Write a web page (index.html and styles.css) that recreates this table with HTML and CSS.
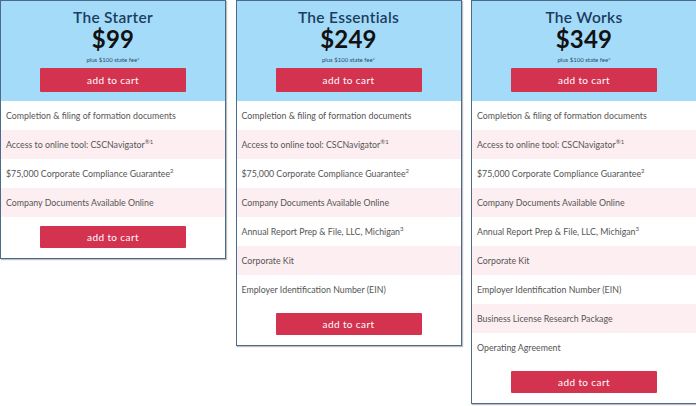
FILE: index.html
```html
<!DOCTYPE html>
<html>
<head>
<meta charset="utf-8">
<link rel="stylesheet" href="styles.css">
</head>
<body>
<div class="plans">
  <div class="card">
    <div class="head">
      <div class="title">The Starter</div>
      <div class="price">$99</div>
      <div class="fee">plus $100 state fee*</div>
      <div class="btn">add to cart</div>
    </div>
    <div class="row">Completion &amp; filing of formation documents</div>
    <div class="row alt">Access to online tool: CSCNavigator<sup>®1</sup></div>
    <div class="row">$75,000 Corporate Compliance Guarantee<sup>2</sup></div>
    <div class="row alt">Company Documents Available Online</div>
    <div class="foot"><div class="btn">add to cart</div></div>
  </div>
  <div class="card">
    <div class="head">
      <div class="title">The Essentials</div>
      <div class="price">$249</div>
      <div class="fee">plus $100 state fee*</div>
      <div class="btn">add to cart</div>
    </div>
    <div class="row">Completion &amp; filing of formation documents</div>
    <div class="row alt">Access to online tool: CSCNavigator<sup>®1</sup></div>
    <div class="row">$75,000 Corporate Compliance Guarantee<sup>2</sup></div>
    <div class="row alt">Company Documents Available Online</div>
    <div class="row">Annual Report Prep &amp; File, LLC, Michigan<sup>3</sup></div>
    <div class="row alt">Corporate Kit</div>
    <div class="row">Employer Identification Number (EIN)</div>
    <div class="foot"><div class="btn">add to cart</div></div>
  </div>
  <div class="card">
    <div class="head">
      <div class="title">The Works</div>
      <div class="price">$349</div>
      <div class="fee">plus $100 state fee*</div>
      <div class="btn">add to cart</div>
    </div>
    <div class="row">Completion &amp; filing of formation documents</div>
    <div class="row alt">Access to online tool: CSCNavigator<sup>®1</sup></div>
    <div class="row">$75,000 Corporate Compliance Guarantee<sup>2</sup></div>
    <div class="row alt">Company Documents Available Online</div>
    <div class="row">Annual Report Prep &amp; File, LLC, Michigan<sup>3</sup></div>
    <div class="row alt">Corporate Kit</div>
    <div class="row">Employer Identification Number (EIN)</div>
    <div class="row alt">Business License Research Package</div>
    <div class="row">Operating Agreement</div>
    <div class="foot"><div class="btn">add to cart</div></div>
  </div>
</div>
</body>
</html>
```
FILE: styles.css
```css
html, body {
  margin: 0;
  padding: 0;
  background: #fff;
}
body {
  font-family: Lato, "Noto Sans", "Liberation Sans", sans-serif;
  width: 696px;
  height: 406px;
  overflow: hidden;
}
.plans {
  display: flex;
  align-items: flex-start;
  gap: 9.5px;
}
.card {
  flex: 0 0 226px;
  box-sizing: border-box;
  border: 1px solid #4a6b89;
  box-shadow: 1px 1px 1px rgba(0, 0, 0, 0.25);
  background: #fff;
}
.head {
  background: #a3dbf9;
  text-align: center;
  padding: 7px 0 9px;
}
.title {
  font-size: 15.5px;
  line-height: 18px;
  font-weight: 600;
  color: #1b3d5e;
  letter-spacing: 0.3px;
}
.price {
  font-size: 24px;
  line-height: 26px;
  font-weight: 700;
  color: #111;
  letter-spacing: 0.2px;
}
.fee {
  font-size: 6px;
  line-height: 10px;
  margin-top: 3px;
  color: #2d4a66;
}
.btn {
  width: 146px;
  height: 24px;
  margin: 3px auto 0;
  background: #d3334f;
  color: #fff;
  font-size: 10px;
  line-height: 24px;
  text-align: center;
  border-radius: 1px;
  letter-spacing: 0.4px;
}
.row {
  height: 29px;
  line-height: 29px;
  padding-left: 5px;
  font-size: 8.8px;
  color: #555;
  white-space: nowrap;
}
.row.alt {
  background: #fdeef1;
}
.row sup {
  font-size: 6px;
  line-height: 0;
  vertical-align: 4px;
}
.foot {
  padding: 9px 0 10px;
}
.foot .btn {
  margin-top: 0;
  height: 22px;
  line-height: 22px;
}
```
